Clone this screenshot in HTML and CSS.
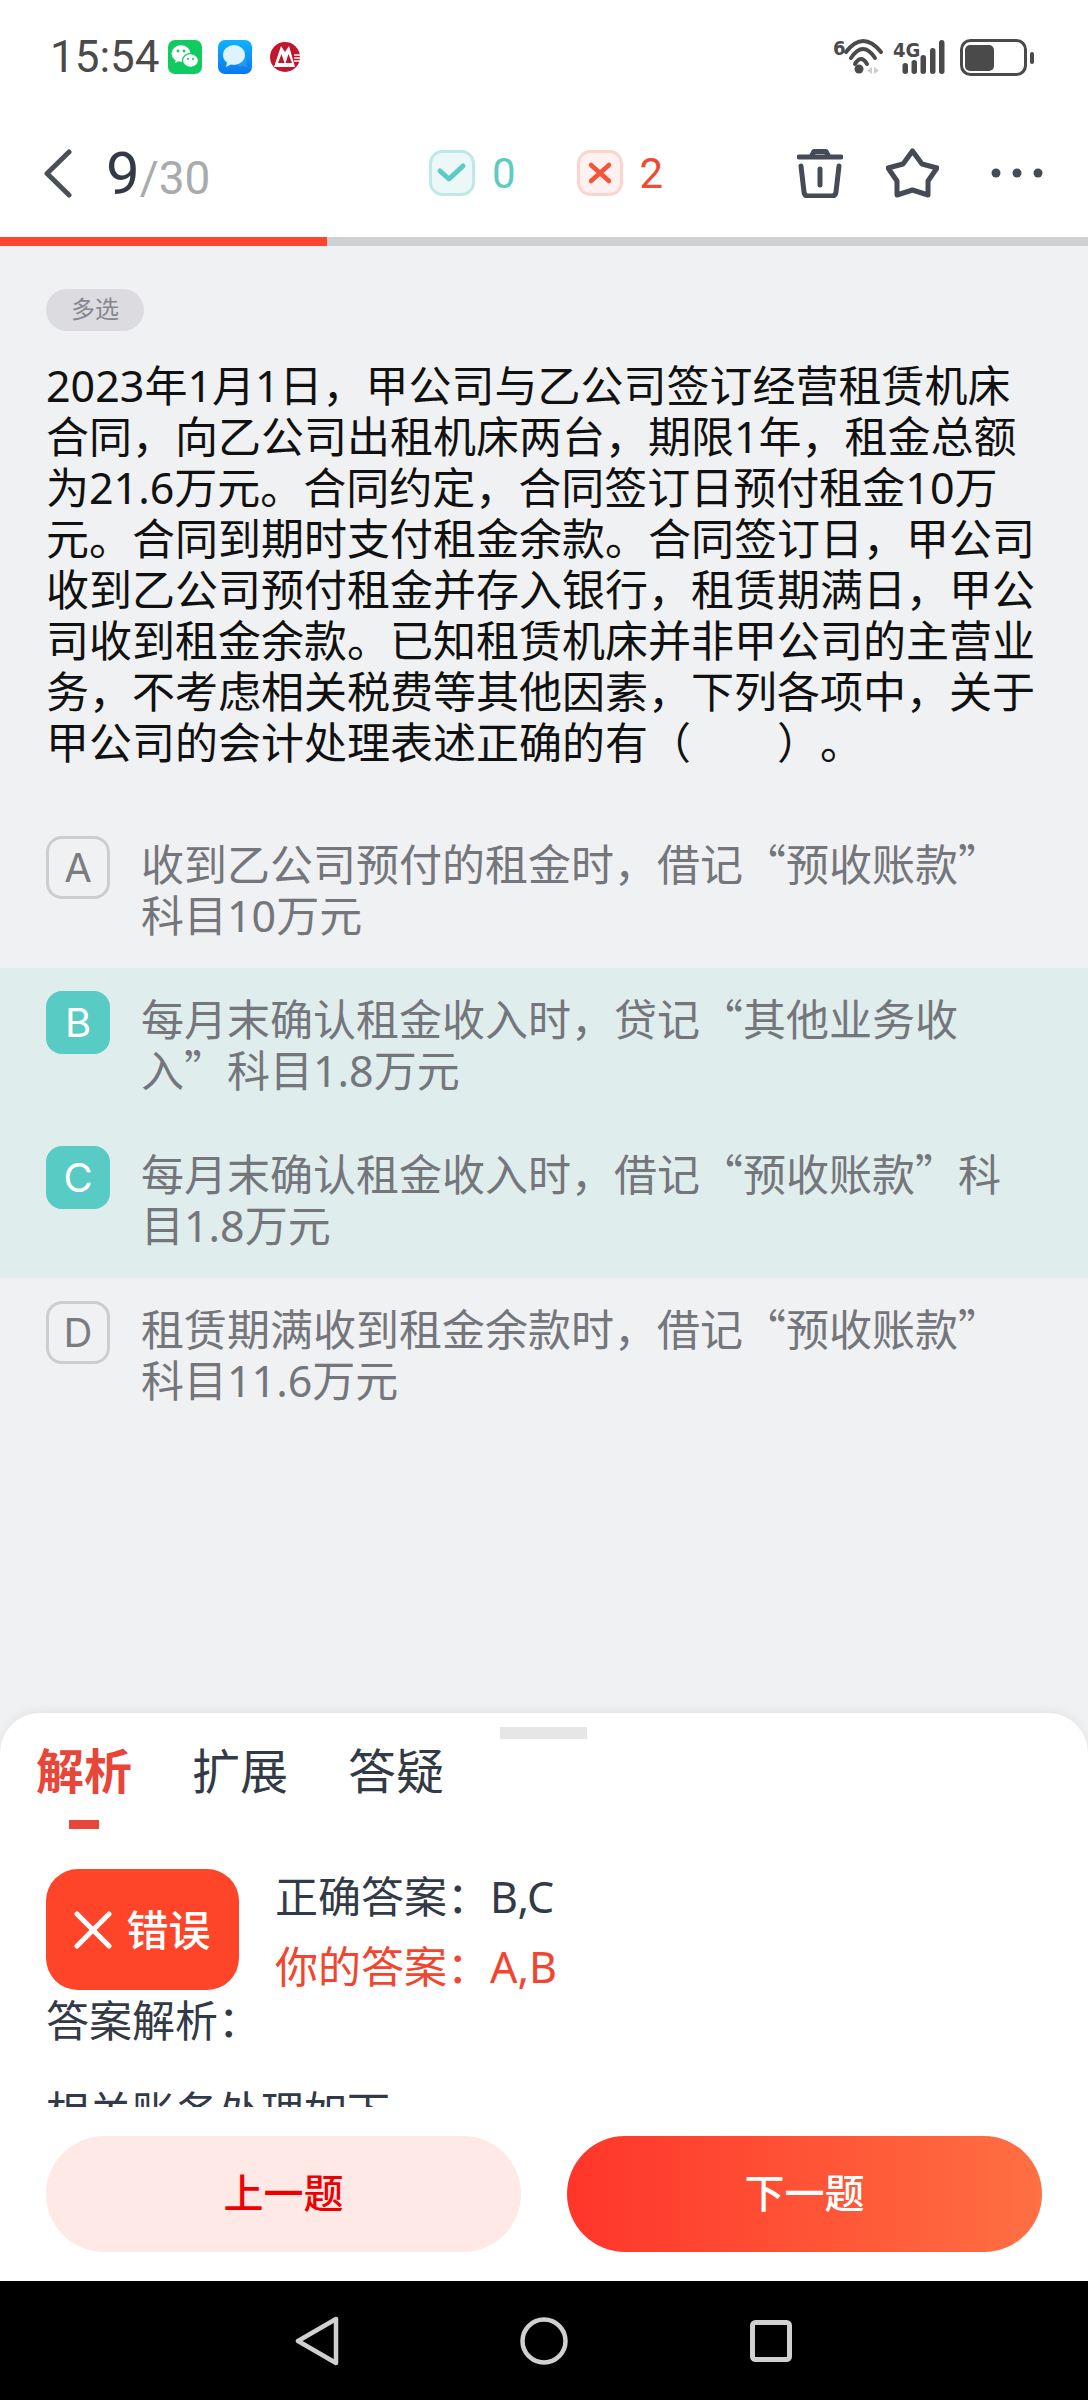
FILE: index.html
```html
<!DOCTYPE html>
<html lang="zh-CN">
<head>
  <meta charset="UTF-8">
  <title>多选题</title>
  <link rel="stylesheet" href="styles.css">
</head>
<body>
<div class="screen">

  <div class="status">
    <span class="time">15:54</span>
    <svg class="app-wechat" width="34" height="34" viewBox="0 0 34 34">
      <rect width="34" height="34" rx="7" fill="#0fcb60"/>
      <ellipse cx="13" cy="13.500" rx="9.500" ry="8.200" fill="#fff"/>
      <path d="M8 19l-1 4 5-2.500z" fill="#fff"/>
      <ellipse cx="22.500" cy="20.500" rx="8" ry="6.800" fill="#fff" stroke="#0fcb60" stroke-width="1.200"/>
      <circle cx="10" cy="11" r="1.400" fill="#0fcb60"/>
      <circle cx="16" cy="11" r="1.400" fill="#0fcb60"/>
      <circle cx="20" cy="19" r="1.100" fill="#0fcb60"/>
      <circle cx="25" cy="19" r="1.100" fill="#0fcb60"/>
    </svg>
    <svg class="app-msg" width="34" height="34" viewBox="0 0 34 34">
      <defs>
        <linearGradient id="msgbg" x1="0" y1="0" x2="0" y2="1">
          <stop offset="0" stop-color="#0db4ff"/>
          <stop offset="1" stop-color="#0a78f2"/>
        </linearGradient>
      </defs>
      <rect width="34" height="34" rx="7" fill="url(#msgbg)"/>
      <path d="M22 17h6.500v8l1.500 2.500-4-1.500h-6z" fill="#1f9bf0"/>
      <ellipse cx="16" cy="15" rx="11" ry="10" fill="#dff3ff"/>
      <path d="M9 22l-1 5 6-3z" fill="#dff3ff"/>
    </svg>
    <svg class="app-bank" width="30" height="30" viewBox="0 0 30 30">
      <circle cx="15" cy="15" r="15" fill="#c1162c"/>
      <path d="M4 25L11 4l4 6 4-6 6 21z" fill="#fff"/>
      <path d="M8 21l3.500-9 3 9zM15.500 21l3-9 3.500 9z" fill="#c1162c"/>
      <path d="M24 13h6M24 16h6M24 19h6" stroke="#fff" stroke-width="1.300"/>
    </svg>
    <div class="status-right">
      <svg width="60" height="40" viewBox="0 0 60 40">
        <text class="net" x="3" y="18">6</text>
        <g fill="none" stroke="#4a4a4a" stroke-width="4" stroke-linecap="round">
          <path d="M16 15Q33 -7 51 15"/>
          <path d="M21 21Q33 3 45 21"/>
          <path d="M25 27Q31 17 37 27"/>
        </g>
        <circle cx="29" cy="32" r="4.500" fill="#4a4a4a"/>
        <path d="M42 30l-5 3.500 5 3.500zM44 30l5 3.500-5 3.500z" fill="#ccc"/>
      </svg>
      <svg width="58" height="40" viewBox="0 0 58 40">
        <text class="net" x="3" y="20">4G</text>
        <g fill="#4a4a4a">
          <rect x="12.500" y="26" width="5.500" height="11" rx="2.700"/>
          <rect x="21.500" y="23" width="5.500" height="14" rx="2.700"/>
          <rect x="30.500" y="18" width="5.500" height="19" rx="2.700"/>
          <rect x="40" y="11" width="5.500" height="26" rx="2.700"/>
          <rect x="49" y="3" width="5.500" height="34" rx="2.700"/>
        </g>
      </svg>
      <svg class="battery" width="78" height="41" viewBox="0 0 78 41">
        <rect x="3.500" y="3.500" width="64" height="34" rx="9" fill="none" stroke="#4a4a4a" stroke-width="3"/>
        <rect x="7" y="8" width="29" height="26" rx="5" fill="#4a4a4a"/>
        <rect x="72" y="15" width="4" height="12" rx="2" fill="#4a4a4a"/>
      </svg>
    </div>
  </div>

  <div class="topbar">
    <svg class="back" width="28" height="49" viewBox="0 0 28 49">
      <path d="M25 3L3 24.500 25 46" fill="none" stroke="#4a5058" stroke-width="5" stroke-linecap="round" stroke-linejoin="round"/>
    </svg>
    <div class="count"><span class="count-now">9</span><span class="count-all">/30</span></div>
    <div class="stat stat-right">
      <svg width="46" height="46" viewBox="0 0 46 46">
        <rect x="1.500" y="1.500" width="43" height="43" rx="12" fill="#ecf8f7" stroke="#bfe9e5" stroke-width="3"/>
        <path d="M11 21l9 8 14-13" fill="none" stroke="#5ccbc3" stroke-width="5" stroke-linecap="round" stroke-linejoin="round"/>
      </svg>
      <span>0</span>
    </div>
    <div class="stat stat-wrong">
      <svg width="46" height="46" viewBox="0 0 46 46">
        <rect x="1.500" y="1.500" width="43" height="43" rx="12" fill="#fef1ef" stroke="#fdd5cf" stroke-width="3"/>
        <path d="M14 15l18 16M32 15L14 31" fill="none" stroke="#f4553a" stroke-width="4.500" stroke-linecap="round"/>
      </svg>
      <span>2</span>
    </div>
    <svg class="trash" width="46" height="49" viewBox="0 0 46 49">
      <g fill="none" stroke="#454c58" stroke-width="5" stroke-linecap="round" stroke-linejoin="round">
        <path d="M2 8h42M14 8l3-5.500h12L32 8"/>
        <path d="M4 17l3 26q.5 4 4 4h24q3.500 0 4-4l3-26"/>
        <path d="M23 20v16"/>
      </g>
    </svg>
    <svg class="star" width="53" height="50" viewBox="0 0 53 50">
      <path d="M26.500 3L36 16l15 4-9 13 0 14-15.500-5L11 47V33L2 20l15-4z" fill="none" stroke="#454a54" stroke-width="5" stroke-linejoin="round"/>
    </svg>
    <svg class="more" width="52" height="10" viewBox="0 0 52 10">
      <circle cx="5" cy="5" r="4.500" fill="#454c58"/>
      <circle cx="26" cy="5" r="4.500" fill="#454c58"/>
      <circle cx="47" cy="5" r="4.500" fill="#454c58"/>
    </svg>
  </div>

  <div class="progress"><div class="progress-done"></div></div>

  <div class="question">
    <span class="tag">多选</span>
    <p class="stem">2023年1月1日，甲公司与乙公司签订经营租赁机床合同，向乙公司出租机床两台，期限1年，租金总额为21.6万元。合同约定，合同签订日预付租金10万元。合同到期时支付租金余款。合同签订日，甲公司收到乙公司预付租金并存入银行，租赁期满日，甲公司收到租金余款。已知租赁机床并非甲公司的主营业务，不考虑相关税费等其他因素，下列各项中，关于甲公司的会计处理表述正确的有（　　）。</p>

    <div class="option">
      <span class="letter">A</span>
      <p>收到乙公司预付的租金时，借记<span class="cjk">“</span>预收账款<span class="cjk">”</span>科目10万元</p>
    </div>
    <div class="option picked">
      <span class="letter">B</span>
      <p>每月末确认租金收入时，贷记<span class="cjk">“</span>其他业务收入<span class="cjk">”</span>科目1.8万元</p>
    </div>
    <div class="option picked">
      <span class="letter">C</span>
      <p>每月末确认租金收入时，借记<span class="cjk">“</span>预收账款<span class="cjk">”</span>科目1.8万元</p>
    </div>
    <div class="option">
      <span class="letter">D</span>
      <p>租赁期满收到租金余款时，借记<span class="cjk">“</span>预收账款<span class="cjk">”</span>科目11.6万元</p>
    </div>
  </div>

  <div class="sheet">
    <div class="handle"></div>
    <div class="sheet-body">
      <div class="tabs">
        <div class="tab active">解析<i></i></div>
        <div class="tab">扩展</div>
        <div class="tab">答疑</div>
      </div>
      <div class="result">
        <div class="verdict">
          <svg width="38" height="38" viewBox="0 0 38 38">
            <path d="M3 3l32 32M35 3L3 35" fill="none" stroke="#fff" stroke-width="5" stroke-linecap="round"/>
          </svg>
          <span>错误</span>
        </div>
        <div class="answers">
          <div>正确答案：B,C</div>
          <div class="mine">你的答案：A,B</div>
        </div>
      </div>
      <p class="explain">答案解析：</p>
      <p class="explain explain-next">相关账务处理如下</p>
    </div>
    <div class="buttons">
      <div class="btn btn-prev">上一题</div>
      <div class="btn btn-next">下一题</div>
    </div>
  </div>

  <div class="navbar">
    <svg width="50" height="50" viewBox="0 0 50 50">
      <path d="M6 25L44 3v44z" fill="none" stroke="#d0d0d0" stroke-width="4.500" stroke-linejoin="round"/>
    </svg>
    <svg width="50" height="50" viewBox="0 0 50 50">
      <circle cx="25" cy="25" r="21.500" fill="none" stroke="#d0d0d0" stroke-width="4.500"/>
    </svg>
    <svg width="50" height="50" viewBox="0 0 50 50">
      <rect x="6.500" y="6.500" width="37" height="37" rx="3" fill="none" stroke="#d0d0d0" stroke-width="5"/>
    </svg>
  </div>

</div>
</body>
</html>
```

FILE: styles.css
```css
* {
  box-sizing: border-box;
}

body {
  margin: 0;
  font-family: "Noto Sans", "Noto Sans CJK SC", sans-serif;
  text-spacing-trim: space-all;
}

p {
  margin: 0;
}

svg {
  display: block;
  flex: none;
}

.cjk {
  font-family: "Noto Sans CJK SC", sans-serif;
  line-height: 1;
}

.screen {
  display: flex;
  flex-direction: column;
  height: 2400px;
  overflow: hidden;
  background: #f0f1f3;
}

/* status bar */
.status {
  display: flex;
  align-items: center;
  height: 86px;
  padding: 28px 52px 0 50px;
  background: #fff;
  color: #4a4a4a;
  font-family: Roboto, sans-serif;
}

.time {
  width: 118px;
  font-size: 44px;
  line-height: 50px;
}

.app-msg {
  margin-left: 16px;
}

.app-bank {
  margin-left: 18px;
}

.status-right {
  display: flex;
  align-items: center;
  margin-left: auto;
}

.battery {
  margin-left: 10px;
}

.net {
  font-family: "DejaVu Sans Condensed", "DejaVu Sans", sans-serif;
  font-size: 20px;
  font-weight: bold;
  fill: #4a4a4a;
}

/* top bar */
.topbar {
  display: flex;
  align-items: center;
  height: 151px;
  padding: 23px 0 0 44px;
  background: #fff;
  font-family: Roboto, sans-serif;
}

.count {
  display: flex;
  align-items: baseline;
  width: 110px;
  margin: 6px 0 0 34px;
  line-height: 60px;
}

.count-now {
  font-size: 60px;
  color: #333a47;
}

.count-all {
  font-size: 46px;
  color: #a9aaae;
}

.stat {
  display: flex;
  align-items: center;
  gap: 17px;
  font-size: 42px;
}

.stat-right {
  margin-left: 213px;
  color: #5ccbc3;
}

.stat-wrong {
  margin-left: 61px;
  color: #ee4a35;
}

.trash {
  margin-left: 134px;
}

.star {
  margin-left: 43px;
}

.more {
  margin-left: 52px;
}

.progress {
  height: 9px;
  background: #cfd0d2;
}

.progress-done {
  width: 327px;
  height: 9px;
  background: #ff4530;
}

/* question */
.question {
  flex: 1;
  padding-top: 43px;
}

.tag {
  display: block;
  width: 98px;
  height: 42px;
  margin-left: 46px;
  border-radius: 21px;
  background: #dcdce0;
  color: #868690;
  font-size: 24px;
  line-height: 40px;
  text-align: center;
}

.stem {
  margin-top: 29px;
  padding: 0 46px;
  color: #111;
  font-size: 43px;
  line-height: 51px;
}

.option {
  display: flex;
  gap: 31px;
  padding: 23px 46px 27px;
  color: #74767b;
  font-size: 43px;
  line-height: 51px;
}

.stem + .option {
  margin-top: 45px;
}

.option p {
  margin-top: 3px;
}

.option.picked {
  background: #dfeded;
}

.letter {
  flex: none;
  width: 64px;
  height: 63px;
  border: 3px solid #cdcdcf;
  border-radius: 16px;
  color: #7a7c80;
  font-family: Inter, sans-serif;
  font-size: 40px;
  line-height: 57px;
  text-align: center;
}

.picked .letter {
  border-color: #57cbc4;
  background: #57cbc4;
  color: #fff;
}

/* bottom sheet */
.sheet {
  position: relative;
  height: 568px;
  border-radius: 40px 40px 0 0;
  background: #fff;
  box-shadow: 0 -2px 12px rgba(0, 0, 0, .06);
}

.handle {
  position: absolute;
  top: 14px;
  left: 500px;
  width: 87px;
  height: 12px;
  background: #e6e6e6;
}

.sheet-body {
  height: 394px;
  overflow: hidden;
}

.tabs {
  display: flex;
  align-items: flex-start;
  gap: 60px;
  height: 156px;
  padding: 28px 0 0 36px;
  color: #333a47;
  font-size: 48px;
  line-height: 60px;
}

.tab {
  display: flex;
  flex-direction: column;
  align-items: center;
}

.tab.active {
  color: #e8463a;
  font-weight: bold;
}

.tab i {
  width: 30px;
  height: 9px;
  margin-top: 19px;
  background: #e8463a;
}

.result {
  display: flex;
  gap: 36px;
  margin-bottom: 3px;
  padding-left: 46px;
  color: #333a47;
  font-size: 43px;
}

.verdict {
  display: flex;
  align-items: center;
  justify-content: center;
  gap: 14px;
  width: 193px;
  height: 121px;
  border-radius: 32px;
  background: #ff4529;
  color: #fff;
  font-size: 42px;
  font-weight: 500;
}

.verdict span {
  margin-top: -4px;
}

.answers {
  display: flex;
  flex-direction: column;
  gap: 20px;
  padding-top: 3px;
  line-height: 50px;
}

.mine {
  color: #f2452f;
}

.explain {
  padding-left: 46px;
  color: #333a47;
  font-size: 43px;
  line-height: 51px;
}

.explain-next {
  margin-top: 40px;
}

.buttons {
  display: flex;
  gap: 46px;
  padding: 29px 46px;
}

.btn {
  flex: 1;
  height: 116px;
  border-radius: 58px;
  font-size: 40px;
  font-weight: 500;
  line-height: 114px;
  text-align: center;
}

.btn-prev {
  background: #ffe9e7;
  color: #ee0000;
}

.btn-next {
  background: linear-gradient(90deg, #ff3529, #ff7043);
  color: #fff;
}

.navbar {
  display: flex;
  align-items: center;
  justify-content: center;
  gap: 177px;
  height: 119px;
  background: #000;
}
```
